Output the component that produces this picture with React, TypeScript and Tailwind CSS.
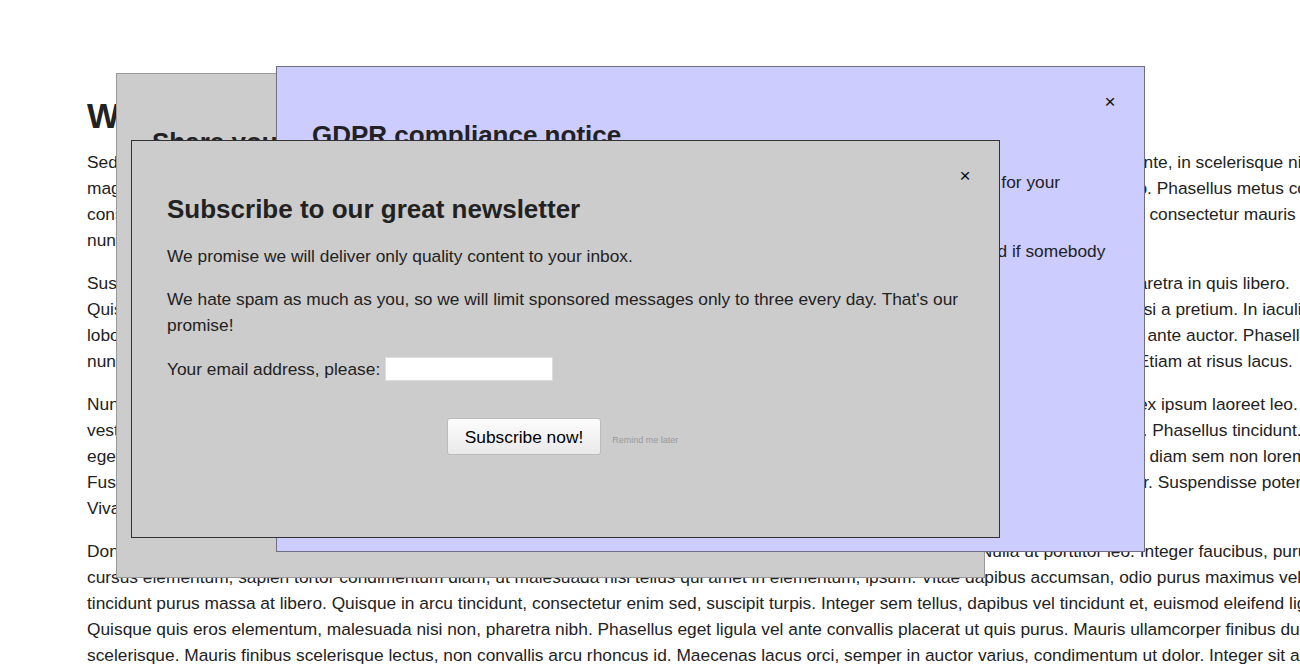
import React from "react";

const paragraphs: string[][] = [
  [
    "Sed at ipsum vitae lectus pulvinar fringilla. Proin tempus, mi quis ultricies hendrerit, felis justo egestas libero, id mollis leo eget ligula nec ante, in scelerisque nisi vel tortor.",
    "magna id tincidunt. Vivamus vel erat a arcu faucibus interdum. Morbi luctus quis non justo dignissim, sit amet pulvinar risus, sed commodo. Phasellus metus condimentum.",
    "consequat. Nam eleifend lacus vel tortor rhoncus, nec aliquam augue blandit. Curabitur a velit at metus fermentum feugiat sed nisl. Donec consectetur mauris in nibh.",
    "nunc, a tempus urna pharetra et. Sed porttitor justo ac nibh congue, vel finibus odio volutpat.",
  ],
  [
    "Suspendisse potenti. Fusce iaculis, ante vitae vestibulum dictum, sem nisl ultrices orci, rutrum massa tellus sit amet erat. Nulla mauris pharetra in quis libero.",
    "Quisque sed felis nec lectus consequat tincidunt. Praesent in magna eget augue elementum malesuada vitae non sapien. Cras et tortor nisi a pretium. In iaculis.",
    "lobortis arcu, eget convallis lectus. Integer dignissim sem in neque feugiat, nunc molestie metus sagittis. Aenean quis porta enim, placerat ante auctor. Phasellus in nibh.",
    "nunc. Maecenas volutpat mi a orci rhoncus, vitae aliquet lorem semper. Mauris bibendum odio elit dapibus, in hendrerit tortor sed iaculis. Etiam at risus lacus.",
  ],
  [
    "Nunc faucibus massa vel ante pellentesque, id vehicula orci hendrerit. Pellentesque habitant tristique senectus et netus et malesuada, in ex ipsum laoreet leo.",
    "vestibulum fermentum. Cras sollicitudin, erat sodales viverra, justo sapien imperdiet ante, sit amet hendrerit nibh ligula vel commodo nunc. Phasellus tincidunt.",
    "eget dolor. Duis ultricies consectetur purus, vitae consequat tortor finibus non. Nullam porttitor neque a elit tincidunt, vel ultricies augue vel diam sem non lorem.",
    "Fusce in lectus nec nulla blandit efficitur. Aliquam erat volutpat. Vestibulum ante ipsum primis in faucibus orci luctus et ultrices nunc tempor. Suspendisse potenti.",
    "Vivamus eu sapien sed risus sagittis dignissim at a leo. Sed pretium felis non.",
  ],
  [
    "Donec vehicula, neque ut tristique consequat, orci felis molestie nulla, nec euismod risus metus lorem. Proin ut erat. Nulla ut porttitor leo. Integer faucibus, purus vel.",
    "cursus elementum, sapien tortor condimentum diam, ut malesuada nisl tellus qui amet in elementum, ipsum. Vitae dapibus accumsan, odio purus maximus velit.",
    "tincidunt purus massa at libero. Quisque in arcu tincidunt, consectetur enim sed, suscipit turpis. Integer sem tellus, dapibus vel tincidunt et, euismod eleifend ligula.",
    "Quisque quis eros elementum, malesuada nisi non, pharetra nibh. Phasellus eget ligula vel ante convallis placerat ut quis purus. Mauris ullamcorper finibus dui.",
    "scelerisque. Mauris finibus scelerisque lectus, non convallis arcu rhoncus id. Maecenas lacus orci, semper in auctor varius, condimentum ut dolor. Integer sit amet.",
  ],
];

function CloseButton() {
  return (
    <button className="absolute top-[24px] right-[24px] w-[20px] h-[21px] flex items-center justify-center text-[19px] leading-[21px] text-[#111]">
      ×
    </button>
  );
}

function Modal({
  className,
  title,
  children,
}: {
  className: string;
  title: string;
  children?: React.ReactNode;
}) {
  return (
    <div className={`absolute w-[869px] px-[35px] pt-[53px] border ${className}`}>
      <CloseButton />
      <h2 className="text-[26px] leading-[30px] font-bold mb-[19px] whitespace-nowrap">
        {title}
      </h2>
      {children}
    </div>
  );
}

export default function App() {
  return (
    <div className="relative w-[1300px] h-[665px] overflow-hidden bg-white text-[#222] text-[17.33px] leading-[26px] font-['Liberation_Sans',Arial,sans-serif]">
      <main className="pl-[87px] pt-[96px]">
        <h1 className="text-[34.67px] leading-[40px] font-bold mb-[13px] whitespace-nowrap">
          Welcome to our totally legit website
        </h1>
        {paragraphs.map((lines, i) => (
          <p key={i} className="mb-[17px]">
            {lines.map((line, j) => (
              <span key={j} className="block whitespace-nowrap">
                {line}
              </span>
            ))}
          </p>
        ))}
      </main>

      <Modal
        className="left-[116px] top-[73px] h-[505px] bg-[#ccc] border-[#999]"
        title="Share your opinion with us"
      />

      <Modal
        className="left-[276px] top-[66px] h-[486px] bg-[#ccf] border-[#6f6f80]"
        title="GDPR compliance notice"
      >
        <p className="mb-[17px] whitespace-nowrap">
          We and our 2,947 partners use cookies to store and access personal data on your device for your
          <br />
          convenience, ad targeting and other things you never asked for.
        </p>
        <p className="whitespace-nowrap">
          Please read our 9-page privacy policy closely. You will not be able to use this site at all and if somebody
          <br />
          asks, we will pretend we never had your data in the first place.
        </p>
      </Modal>

      <Modal
        className="left-[131px] top-[140px] h-[398px] bg-[#ccc] border-[#333]"
        title="Subscribe to our great newsletter"
      >
        <p className="mb-[17px]">We promise we will deliver only quality content to your inbox.</p>
        <p className="mb-[18px]">
          We hate spam as much as you, so we will limit sponsored messages only to three every day. That's our promise!
        </p>
        <div className="flex items-center gap-[5px]">
          <span>Your email address, please:</span>
          <input className="w-[168px] h-[24px] bg-white border border-[#ddd] outline-none" />
        </div>
        <div className="mt-[36px] pr-[6px] text-center">
          <button className="h-[37px] px-[17px] border border-[#bbb] rounded-[3px] bg-gradient-to-b from-[#fdfdfd] to-[#e9e9e9] text-black">
            Subscribe now!
          </button>
          <span className="ml-[11px] text-[9px] leading-[10px] text-[#999]">Remind me later</span>
        </div>
      </Modal>
    </div>
  );
}
